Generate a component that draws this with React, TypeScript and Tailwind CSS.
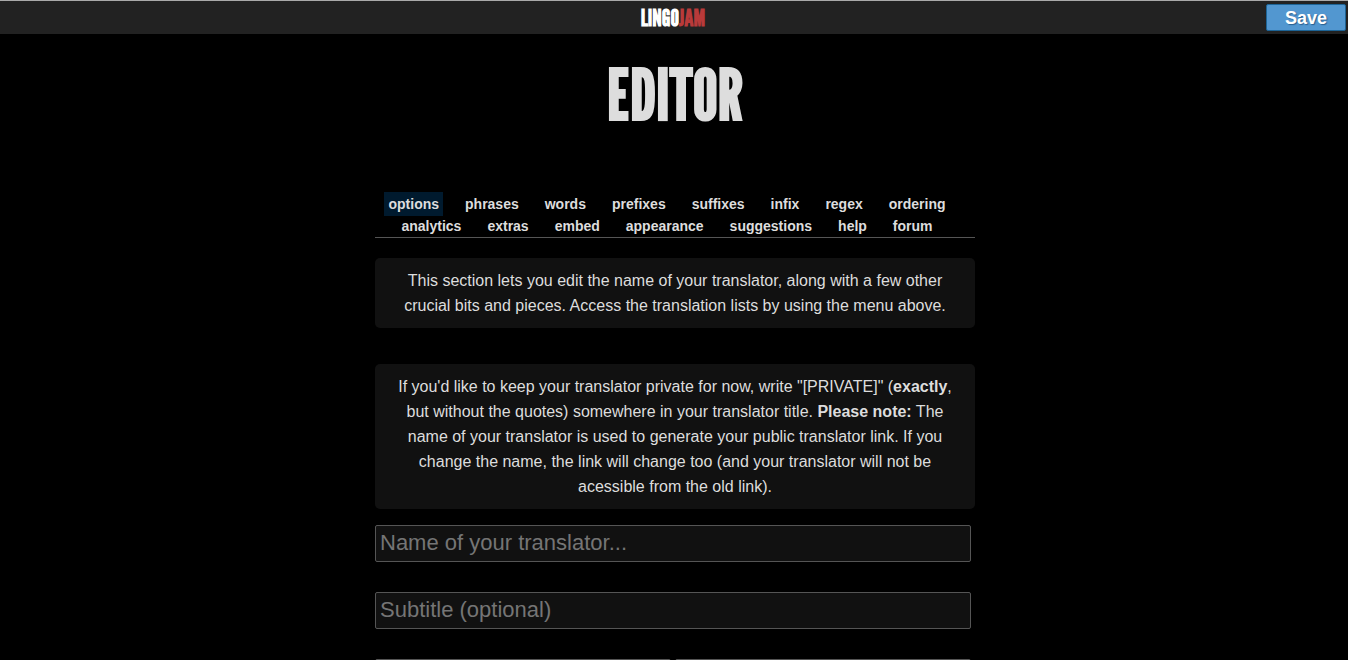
import type { ReactNode } from 'react';

const tabs = [
  'options', 'phrases', 'words', 'prefixes', 'suffixes', 'infix', 'regex', 'ordering',
  'analytics', 'extras', 'embed', 'appearance', 'suggestions', 'help', 'forum',
];

const display =
  "font-['League_Gothic','Oswald','Open_Sans_Condensed','Roboto_Condensed','Liberation_Sans_Narrow','Liberation_Sans',sans-serif]";
const field =
  'block rounded-xs border border-[#555] bg-[#111] px-1 pb-0.5 text-[22px] text-[#ddd] placeholder-[#757575] outline-none';

function Note({ children }: { children: ReactNode }) {
  return (
    <p className="rounded-[5px] bg-[#111] px-5 py-2.5 text-center text-base leading-[25px]">{children}</p>
  );
}

export default function App() {
  return (
    <div className="min-h-screen bg-black font-['Liberation_Sans',Arial,sans-serif] text-[#ddd]">
      <header className="grid h-[34px] grid-cols-[1fr_auto_1fr] items-center border-t border-[#aaa] bg-[#222] pr-0.5">
        <a href="/" className={`col-start-2 text-2xl leading-none font-bold text-white ${display}`}>
          LINGO<span className="text-[#b93a3a]">JAM</span>
        </a>
        <button
          type="button"
          className="h-[27px] w-20 justify-self-end rounded-xs border border-[#1d6496] bg-[#5297d0] text-lg leading-none font-bold text-white [text-shadow:1px_1px_1px_#2a5f8f]"
        >
          Save
        </button>
      </header>

      <main className="pl-0.5">
        <div className="mx-auto w-full max-w-[600px]">
          <h1 className={`flex h-[158px] items-start justify-center pt-7 text-[70px] leading-[64px] font-bold ${display}`}>
            EDITOR
          </h1>

          <nav className="flex flex-wrap justify-center gap-x-[18px] border-b border-[#555] pt-px pr-4 text-sm font-bold">
            {tabs.map((tab) => (
              <a
                key={tab}
                href={`#${tab}`}
                className={`-my-px px-1 leading-6 ${tab === 'options' ? 'bg-[#001a2e]' : ''}`}
              >
                {tab}
              </a>
            ))}
          </nav>

          <div className="mt-5 flex flex-col gap-9">
            <Note>
              This section lets you edit the name of your translator, along with a few other crucial bits
              and pieces. Access the translation lists by using the menu above.
            </Note>
            <Note>
              If you'd like to keep your translator private for now, write "[PRIVATE]" (<b>exactly</b>, but
              without the quotes) somewhere in your translator title. <b>Please note:</b> The name of your
              translator is used to generate your public translator link. If you change the name, the link
              will change too (and your translator will not be acessible from the old link).
            </Note>
          </div>

          <form className="mt-4 flex flex-col gap-[30px] pr-1">
            <input aria-label="Name" placeholder="Name of your translator..." className={`h-[37px] w-full ${field}`} />
            <input aria-label="Subtitle" placeholder="Subtitle (optional)" className={`h-[37px] w-full ${field}`} />
            <div className="grid grid-cols-2 gap-1">
              <textarea aria-label="Left box" className={`h-28 resize-none ${field}`} />
              <textarea aria-label="Right box" className={`h-28 resize-none ${field}`} />
            </div>
          </form>
        </div>
      </main>
    </div>
  );
}
